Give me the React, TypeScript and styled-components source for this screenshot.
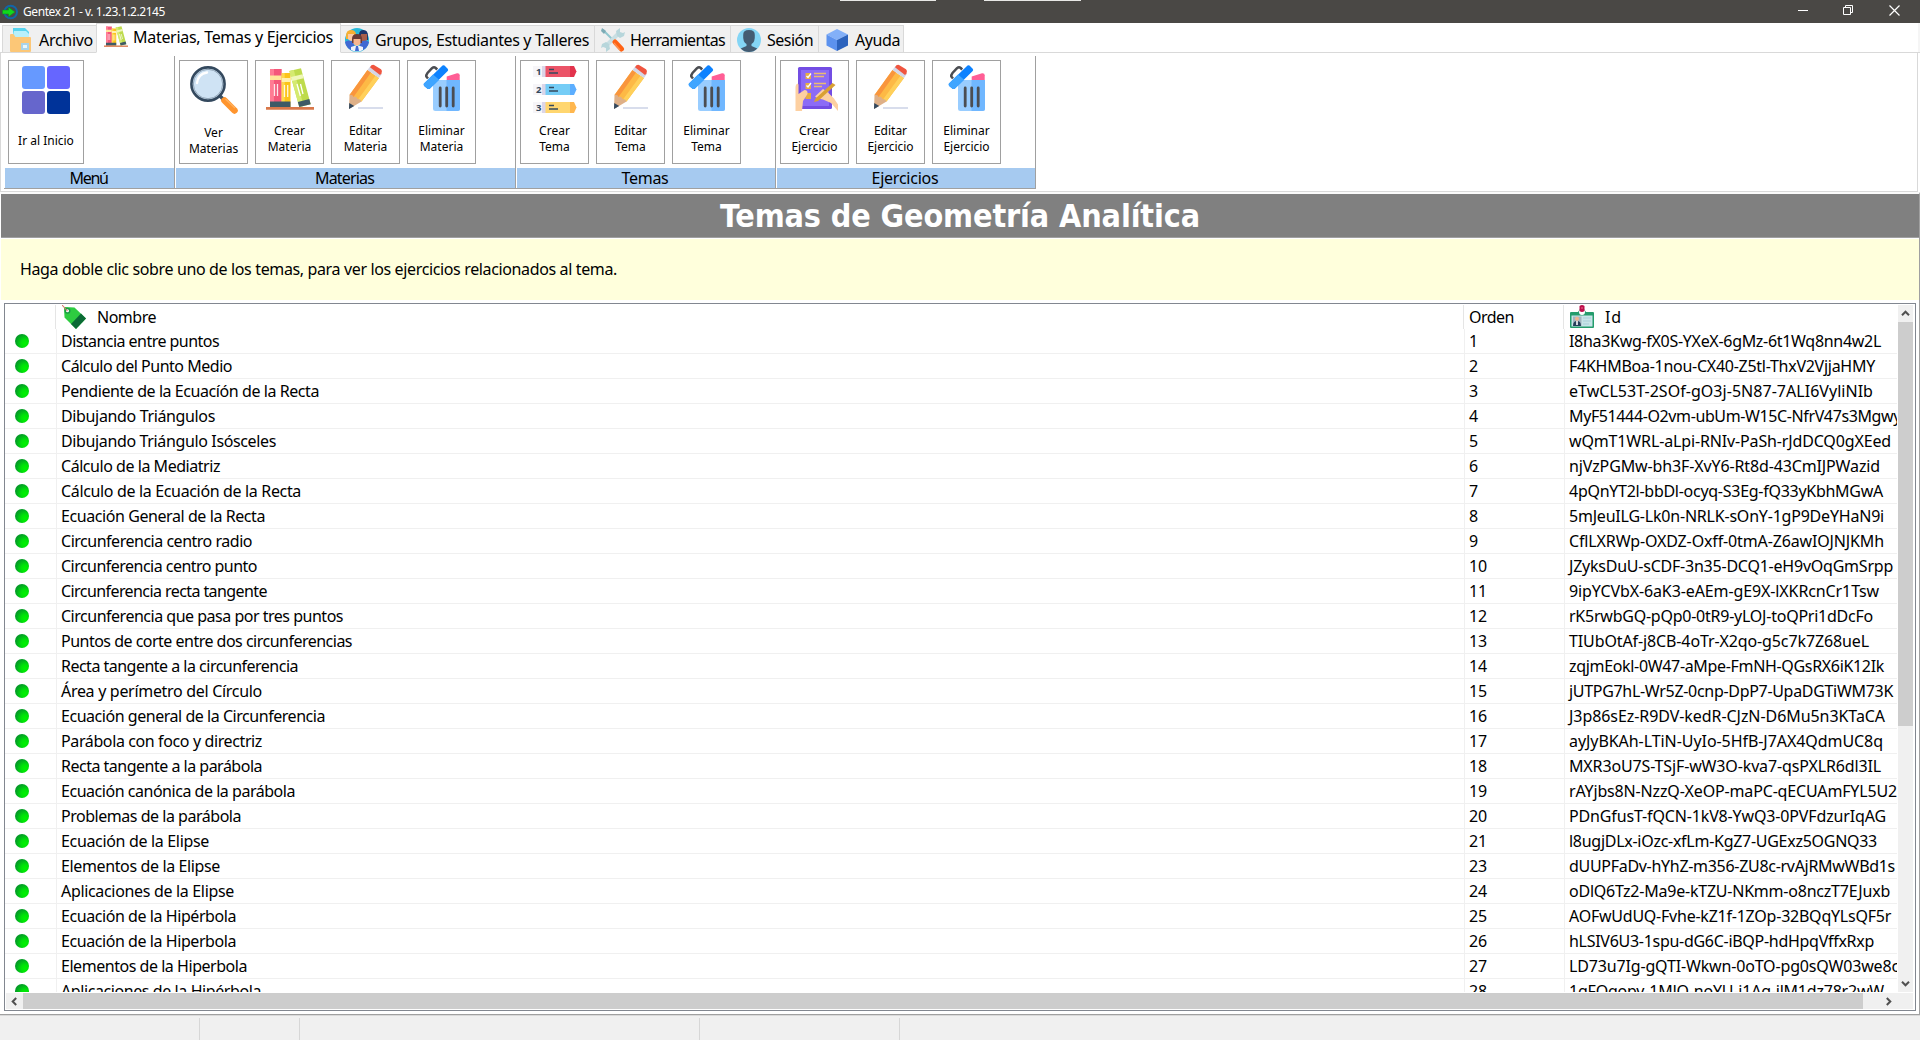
import React, { useLayoutEffect, useRef, useState } from "react";
import styled, { createGlobalStyle } from "styled-components";

const ui = `"Noto Sans", "DejaVu Sans Condensed", sans-serif`;

const GlobalStyle = createGlobalStyle`
  * { box-sizing: border-box; }
  body { margin: 0; background: #fff; overflow: hidden; }
  svg { display: block; flex: none; }
`;

/* ---------- text with a fixed advance width ---------- */

const Run = styled.span`
  display: inline-block;
  white-space: pre;
  font-variant-ligatures: none;
`;

function Fit({ w, children }: { w: number; children: string }) {
  const ref = useRef<HTMLSpanElement>(null);
  const [spacing, setSpacing] = useState(0);
  useLayoutEffect(() => {
    const natural = ref.current!.getBoundingClientRect().width;
    setSpacing((w - natural) / children.length);
  }, [w, children]);
  return (
    <Run ref={ref} style={{ letterSpacing: spacing }}>
      {children}
    </Run>
  );
}

/* ---------- window frame ---------- */

const Window = styled.div`
  display: flex;
  flex-direction: column;
  width: 1920px;
  height: 1040px;
  background: #fff;
  color: #000;
  font: 16px/24px ${ui};
  overflow: hidden;
`;

const TitleBar = styled.header`
  position: relative;
  display: flex;
  align-items: center;
  flex: none;
  height: 23px;
  padding: 0 20px 0 2px;
  gap: 5px;
  background: #4a4845;
  color: #fff;
  font-size: 12px;
  line-height: 22px;
`;

const Caption = styled.div`
  flex: 1;
`;

const EdgeMark = styled.i<{ $x: number; $w: number }>`
  position: absolute;
  top: 0;
  left: ${(p) => p.$x}px;
  width: ${(p) => p.$w}px;
  height: 1px;
  background: #e8e8e6;
`;

const Controls = styled.div`
  display: flex;
  gap: 35px;
  padding-bottom: 2px;
`;

/* ---------- tabs ---------- */

const TabStrip = styled.nav`
  display: flex;
  align-items: flex-end;
  flex: none;
  height: 30px;
  padding-left: 2px;
  box-shadow: inset 0 -1px #d9d9d9, inset -2px 0 #f5f5f5;
`;

const Tab = styled.div<{ $w: number; $pad: number; $gap: number; $active?: boolean }>`
  display: flex;
  align-items: center;
  width: ${(p) => p.$w}px;
  height: ${(p) => (p.$active ? 30 : 28)}px;
  padding: ${(p) => (p.$active ? "0 0 3px" : "1px 0 0")} ${(p) => p.$pad}px;
  gap: ${(p) => p.$gap}px;
  border: 1px solid #d9d9d9;
  border-left-width: ${(p) => (p.$active ? 1 : 0)}px;
  border-bottom-color: ${(p) => (p.$active ? "#fff" : "#d9d9d9")};
  background: ${(p) => (p.$active ? "#fff" : "#f0f0f0")};
  &:first-child { border-left-width: 1px; border-right-width: 0; }
`;

/* ---------- ribbon ---------- */

const Ribbon = styled.section`
  display: flex;
  flex: none;
  width: 1918px;
  height: 139px;
  padding: 3px 0 0 3px;
  border: solid #d9d9d9;
  border-width: 0 1px 1px;
`;

const Group = styled.div<{ $w: number }>`
  display: flex;
  flex-direction: column;
  width: ${(p) => p.$w}px;
  height: 133px;
  border: solid #a0a0a0;
  border-width: 0 1px 1px 0;
`;

const GroupButtons = styled.div`
  display: flex;
  flex: 1;
  gap: 7px;
  padding: 4px 0 0 4px;
`;

const GroupLabel = styled.div`
  height: 20px;
  margin-left: 1px;
  padding-right: 2px;
  background: #a6caf0;
  line-height: 20px;
  text-align: center;
`;

const ToolButton = styled.button<{ $wide?: boolean; $drop: number }>`
  display: flex;
  flex-direction: column;
  align-items: center;
  width: ${(p) => (p.$wide ? 76 : 69)}px;
  height: 104px;
  padding: 5px 0 0;
  border: 1px solid #a0a0a0;
  background: #fff;
  color: #000;
  font: 12px/16px ${ui};
  text-align: center;
  white-space: pre;
  span { margin-top: ${(p) => p.$drop}px; }
`;

/* ---------- content ---------- */

const Content = styled.main`
  display: flex;
  flex-direction: column;
  flex: none;
  height: 823px;
  padding-left: 1px;
  border: solid #a0a0a0;
  border-width: 0 1px 1px 0;
  border-top: 2px solid #fafafa;
`;

const Heading = styled.h1`
  flex: none;
  height: 44px;
  margin: 0;
  border-bottom: 1px solid #a0a0a0;
  background: #808080;
  color: #fff;
  font: bold 32px/44px "DejaVu Sans Condensed", "Noto Sans", sans-serif;
  text-align: center;
`;

const Hint = styled.p`
  flex: none;
  height: 61px;
  margin: 1px 0 3px;
  padding: 18px 0 0 19px;
  background: #ffffdc;
`;

const Grid = styled.div`
  display: grid;
  grid-template: 687px 1fr / 1892px 1fr;
  width: 1912px;
  height: 708px;
  margin-left: 3px;
  padding: 1px 2px 1px 0;
  border: 1px solid #828790;
`;

const Rows = styled.div`
  overflow: hidden;
`;

const HeadRow = styled.div`
  display: grid;
  grid-template-columns: 50px 1408px 100px 1fr;
  height: 24px;
`;

const HeadCell = styled.div<{ $gap?: number }>`
  display: flex;
  align-items: center;
  gap: ${(p) => p.$gap ?? 0}px;
  padding-left: ${(p) => (p.$gap ? 6 : 5)}px;
  border-left: 1px solid #e5e5e5;
  line-height: 22px;
  &:first-child { border-left-color: transparent; }
`;

const Row = styled.div`
  display: grid;
  grid-template-columns: 51px 1408px 100px 1fr;
  height: 25px;
  border-bottom: 1px solid #f0f0f0;
`;

const Cell = styled.div`
  overflow: hidden;
  padding: 1px 0 0 4px;
  border-left: 1px solid #f0f0f0;
  line-height: 23px;
  white-space: nowrap;
`;

const StateCell = styled.div`
  display: flex;
  align-items: center;
  padding-left: 10px;
`;

const Dot = styled.i`
  width: 14px;
  height: 14px;
  border-radius: 50%;
  background: radial-gradient(circle at 72% 68%, #00f200 0, #00e208 28%, #03a822 62%, #0b7a35 100%);
`;

const VScroll = styled.div`
  display: flex;
  flex-direction: column;
  justify-content: space-between;
  width: 15px;
  margin-left: 1px;
  background: #f0f0f0;
`;

const VThumb = styled.div`
  height: 404px;
  margin-bottom: auto;
  background: #cdcdcd;
`;

const HScroll = styled.div`
  display: flex;
  height: 16px;
  margin: 1px 0 0 1px;
  background: #f0f0f0;
`;

const HThumb = styled.div`
  width: 1840px;
  background: #cdcdcd;
`;

const Corner = styled.div`
  width: 16px;
  height: 16px;
  margin-top: 1px;
  background: #f0f0f0;
`;

const ArrowBox = styled.div<{ $w: number; $h: number }>`
  display: flex;
  align-items: center;
  justify-content: center;
  width: ${(p) => p.$w}px;
  height: ${(p) => p.$h}px;
`;

const Spacer = styled.div`
  flex: 1;
`;

const StatusBar = styled.footer`
  display: flex;
  flex: 1;
  padding-top: 2px;
  background: #f0f0f0;
  border-top: 1px solid #d9d9d9;
`;

const StatusPane = styled.div<{ $w: number }>`
  width: ${(p) => p.$w}px;
  height: 22px;
  border-right: 1px solid #d7d7d7;
`;

/* ---------- icons ---------- */

const AppIcon = () => (
  <svg width="16" height="16" viewBox="0 0 16 16">
    <circle cx="8.700" cy="8" r="6.300" fill="none" stroke="#1266a8" strokeWidth="1.900" />
    <path d="M.5 6h6V3.200L13 8l-6.500 4.800V10h-6z" fill="#12d81b" stroke="#0b8f2c" strokeWidth=".6" />
  </svg>
);

const MinimizeIcon = () => (
  <svg width="10" height="11" viewBox="0 0 10 11"><path d="M0 5.5h10" stroke="#fff" /></svg>
);
const RestoreIcon = () => (
  <svg width="11" height="11" viewBox="0 0 11 11" fill="none" stroke="#fff">
    <path d="M.5 2.5h7v7h-7zM2.5 2.5v-2h7v7h-2" />
  </svg>
);
const CloseIcon = () => (
  <svg width="11" height="11" viewBox="0 0 11 11"><path d="M.5.5l10 10M10.5.5l-10 10" stroke="#fff" strokeWidth="1.2" /></svg>
);

const FolderIcon = () => (
  <svg width="24" height="24" viewBox="0 0 24 24">
    <path d="M4 0h12l4 4v8H4z" fill="#58d4ef" />
    <path d="M5 3h12l3 3v6H3z" fill="#b8f0fb" />
    <path d="M1 7q0-1 1-1h2q1 0 1.500 1.500T7 9h14q1 0 1 1v13q0 1-1 1H2q-1 0-1-1z" fill="#fcc777" />
    <path d="M12 15h8v7h-8z" fill="#a9d3ea" />
    <path d="M14 17h4v3h-4z" fill="#e9f6fc" />
  </svg>
);

const BooksIcon = ({ size }: { size: number }) => (
  <svg width={size} height={size} viewBox="0 0 48 48">
    <path d="M4 3h11.700v38H4z" fill="#f4577a" />
    <path d="M4 3h4v38H4z" fill="#ff7b94" />
    <path d="M4 9.500h11.700V14H4z" fill="#ffe59a" />
    <path d="M15.700 7H24.500v34h-8.800z" fill="#fcc419" />
    <path d="M15.700 7h3v34h-3z" fill="#ffd84d" />
    <path d="M15.700 12h8.800v4h-8.800z" fill="#fff0b0" />
    <path d="M4 35.500h20.500V41H4z" fill="#3e5a66" />
    <path d="M8.500 18v12M11.500 18v12M18.500 19v12M21.700 19v12" stroke="#fff" strokeWidth="1.300" opacity=".85" />
    <path d="M23.300 5L35 2.300l9.700 36L33.300 41z" fill="#bedb4c" />
    <path d="M23.300 5l4.500-1 9.900 36-4.400 1z" fill="#d5ea70" />
    <path d="M25 11l11.600-2.800 1 4L26 15z" fill="#f0f7ba" />
    <path d="M31.800 36l11.500-3 1.400 5.300L33.300 41z" fill="#3e5a66" />
    <path d="M31 18l3.400 12M34.500 18l2.500 10" stroke="#fff" strokeWidth="1.300" />
    <path d="M0 41h48v2.700H0z" fill="#d9784a" />
  </svg>
);

const PeopleIcon = () => (
  <svg width="24" height="24" viewBox="0 0 24 24">
    <circle cx="12" cy="12" r="12" fill="#28b9d9" />
    <path d="M1 8q0-6 5-6t5 5v4H1z" fill="#f7b032" />
    <path d="M3 6h6v5q-3 4-6 0z" fill="#fdc9a2" />
    <path d="M14 7q0-5 4.500-5T23 8v4h-8z" fill="#1d356b" />
    <path d="M16 6h6v6q-3 3-6 0z" fill="#a85e4a" />
    <path d="M0 14q3-3 9 0v9Q1 21 0 14zM24 14q-3-3-9 0v9q8-2 9-9z" fill="#4169d2" />
    <path d="M7 11q0-5 5-5t5 5v4H7z" fill="#6b3b36" />
    <path d="M8.500 11h7v5q-3.500 4-7 0z" fill="#f6b68f" />
    <path d="M6 19q6-3 12 0v3q-6 3-12 0z" fill="#eff3fa" />
    <path d="M11 18h2l1 5h-4z" fill="#4169d2" />
  </svg>
);

const ToolsIcon = () => (
  <svg width="24" height="24" viewBox="0 0 24 24" fill="none">
    <path d="M2 2l10 10" stroke="#90c6ce" strokeWidth="2" strokeLinecap="round" />
    <path d="M1 0l4 3-2 3-3-3z" fill="#7dabb5" />
    <path d="M4 19L18 5" stroke="#c9dfe3" strokeWidth="4" />
    <path d="M16 8l-1-5 4-3 0 4 3 1 2-1-1 4-4 2zM8 16l1 5-4 3V20l-3-1-2 1 1-4 4-2z" fill="#b7d6db" />
    <path d="M14 14l6.500 7" stroke="#ff6315" strokeWidth="5" strokeLinecap="round" />
    <path d="M13 15l6 7" stroke="#ff9350" strokeWidth="1.300" />
  </svg>
);

const UserIcon = () => (
  <svg width="24" height="24" viewBox="0 0 24 24">
    <circle cx="12" cy="12" r="12" fill="#84d5f5" />
    <path d="M6.200 7Q6 2 12 2t5.800 5q.5 7-3.300 9v2l5.800 2.500Q17 24 12 24t-8.300-3.500L9.500 18v-2Q5.700 14 6.200 7z" fill="#445c72" />
  </svg>
);

const CubeIcon = () => (
  <svg width="24" height="24" viewBox="0 0 24 24">
    <path d="M12 1l11 5.500-11 5.500L1.500 6.500z" fill="#83b0f8" />
    <path d="M1.500 6.500L12 12v11L1.500 17.500z" fill="#5c92ee" />
    <path d="M23 6.500L12 12v11l11-5.500z" fill="#2c63bd" />
  </svg>
);

const TilesIcon = () => (
  <svg width="48" height="48" viewBox="0 0 48 48">
    <rect width="23" height="23" rx="3" fill="#6699ff" />
    <rect x="25" width="23" height="23" rx="3" fill="#6666ff" />
    <rect y="25" width="23" height="23" rx="3" fill="#6666cc" />
    <rect x="25" y="25" width="23" height="23" rx="3" fill="#003399" />
  </svg>
);

const LensIcon = () => (
  <svg width="48" height="48" viewBox="0 0 48 48" fill="none">
    <path d="M29 29l6 6" stroke="#3b5063" strokeWidth="3.500" />
    <path d="M34.500 34.500l10 10" stroke="#ff952e" strokeWidth="6.500" strokeLinecap="round" />
    <path d="M35.500 33l9.500 9" stroke="#ffb05c" strokeWidth="1.500" />
    <circle cx="18" cy="18" r="16.600" fill="#cfe3f4" stroke="#34495e" strokeWidth="2.600" />
    <circle cx="18" cy="18" r="14.700" stroke="#8fa3b5" strokeWidth="1" />
    <path d="M7 17Q8 8 17 6.500" stroke="#fff" strokeWidth="2.400" strokeLinecap="round" />
  </svg>
);

const PencilIcon = () => (
  <svg width="48" height="48" viewBox="0 0 48 48" overflow="visible">
    <path d="M16 42h25" stroke="#d4daea" strokeWidth="1.800" />
    <path d="M7.500 29L25.500 4l11.500 8L19.500 35.500z" fill="#fdb945" />
    <path d="M7.500 29L25.500 4l3.500 2.500L11.500 31z" fill="#f9953c" />
    <path d="M16 33.500L33.600 9.600 37 12 19.500 35.500z" fill="#ffd05a" />
    <path d="M7.500 29q3-1 4 2 3-1 4 2 3-.5 4 2.500L7 43z" fill="#deb088" />
    <path d="M7.200 37l5 3L7 43z" fill="#34495e" />
    <path d="M25.500 4L28.500 0l11.300 8L37 12z" fill="#d4d6e6" />
    <path d="M28 1.300q1.500-3 4-2.300l7 4.300q2 2 .5 4.200L38 9z" fill="#f0553f" />
  </svg>
);

const TrashIcon = () => (
  <svg width="48" height="48" viewBox="0 0 48 48" overflow="visible">
    <path d="M28.700 14.500v-4L39 7.300q2.700-.3 2.700 2v5z" fill="#ff5e95" />
    <path d="M15 14h27v28.500q0 2.500-2.500 2.500h-22Q15 45 15 42.500z" fill="#99cdff" />
    <path d="M28.500 14H42v28.500q0 2.500-2.500 2.500h-11z" fill="#70b7ff" />
    <path d="M22.200 22v18M28.700 22v18M35.200 22v18" stroke="#4b4d52" strokeWidth="2.800" strokeLinecap="round" />
    <path d="M10 12.500L8.300 10.500Q8 9 9.500 7L14 2.200q2-1.700 3.700-.2l1.500 1.500" fill="none" stroke="#4b4d52" strokeWidth="2.500" />
    <path d="M6 17.500L24 0q1-1.400 2.500-.4l3.200 3.100q1 1.300 0 2.400L12 22.500q-1.400 1-2.800 0L6.200 20q-1-1.300-.2-2.500z" fill="#0c82ff" />
    <path d="M6 17.500l9-8.900 6.200 5.200L12 22.500q-1.400 1-2.800 0L6.200 20q-1-1.300-.2-2.500z" fill="#3fa5ff" />
  </svg>
);

const listBands = [
  { y: 0, main: "#eb5468", tip: "#e2334c" },
  { y: 18, main: "#75cdf6", tip: "#5caeff" },
  { y: 36, main: "#ffd66f", tip: "#ffb74e" },
];

const ListIcon = () => (
  <svg width="48" height="48" viewBox="0 0 48 48">
    {listBands.map((b, i) => (
      <g key={b.y} transform={`translate(0 ${b.y})`}>
        <path d="M2 0h10v11H2z" fill="#f6f5f8" />
        <path d="M11 0h4v11h-4z" fill="#dbd5e8" />
        <path d="M14.500 0H40v11H14.500z" fill={b.main} />
        <path d="M39 0h4l2.500 5.500L43 11h-4z" fill={b.tip} />
        <path d="M18 3.500h5M18 7h9" stroke="#34495e" strokeWidth="1.300" />
        <text x="5" y="9" fontSize="9.500" fontWeight="700" fontFamily="Noto Sans" fill="#34495e">{i + 1}</text>
      </g>
    ))}
  </svg>
);

const ChecklistIcon = () => (
  <svg width="48" height="48" viewBox="0 0 48 48">
    <rect x="7" y="1" width="34" height="42" rx="1.500" fill="#734de3" />
    <path d="M10 4h28v36H10z" fill="#8c6bf6" />
    <path d="M14.500 7h5.500v6h-5.500zM14.500 17h5.500v6h-5.500zM14.500 27h5.500v6h-5.500z" fill="#e6ad42" />
    <path d="M15.500 10l1.500 1.500 3-4M15.500 19.500L17 21l3-4" fill="none" stroke="#fff" strokeWidth="1.300" />
    <path d="M23 7.500h12M23 10.500h10M23 17.500h12M23 20.500h8" stroke="#ecbb70" strokeWidth="1.500" />
    <path d="M4.500 45V21q0-3 2-3.500l1 1v9.500l6-4q3.500 0 3 4l-4.500 7-1 10z" fill="#fdd0a1" />
    <path d="M24 30.500l8-7.500 5 3.500 6 6 4 6V45l-7-8-8-3.500-5-1z" fill="#fdd0a1" />
    <path d="M23 36l1.500-3.500L41.500 17l3 2L27 35z" fill="#d9a032" />
  </svg>
);

const TagIcon = () => (
  <svg width="24" height="24" viewBox="0 0 24 24">
    <path d="M2 3q0-1 1-1l9.500.5L24 13.500 14 24 2.500 12.500z" fill="#2ecc40" />
    <path d="M24 13.500L14 24 9 19l10-10.500z" fill="#0b6a35" />
    <circle cx="5.500" cy="5.800" r="3" fill="#1a9b45" />
    <circle cx="5.500" cy="5.800" r="1.500" fill="#fff" />
    <path d="M0 0l5.500 6" stroke="#d5766a" strokeWidth="1.100" />
  </svg>
);

const BadgeIcon = () => (
  <svg width="24" height="24" viewBox="0 0 24 24">
    <path d="M1 7h7l2-3h4l2 3h7q1 0 1 1v14q0 1-1 1H1q-1 0-1-1V8q0-1 1-1z" fill="#249c6c" />
    <path d="M1.500 10.500h21v11h-21z" fill="#c7e4e8" />
    <path d="M3 11.500h8.500v9.500H3z" fill="#a2b6c1" />
    <path d="M3 21q0-5 4-5t4 5z" fill="#263f5a" />
    <path d="M6.200 16h1.600v4H6.200z" fill="#fff" />
    <circle cx="7" cy="13.800" r="2.100" fill="#efb491" />
    <path d="M13 13h8M13 16h8M13 19h6" stroke="#a9cfd8" strokeWidth="1" />
    <circle cx="12" cy="7" r="3" fill="#fff" />
    <path d="M9.500 1q2.500-2 5 0v5q-2.500 2-5 0z" fill="#bd0e4b" />
    <path d="M12 2v2" stroke="#f06a8d" />
  </svg>
);

const rotations = { up: 0, right: 90, down: 180, left: 270 };
const Chevron = ({ to }: { to: keyof typeof rotations }) => (
  <svg width="9" height="9" viewBox="0 0 9 9">
    <path d="M1 6.200L4.500 2.700 8 6.200" fill="none" stroke="#505050" strokeWidth="2" transform={`rotate(${rotations[to]} 4.5 4.5)`} />
  </svg>
);

/* ---------- data ---------- */

const tabs = [
  { text: "Archivo", w: 94, pad: 6, gap: 6, tw: 54, icon: <FolderIcon /> },
  { text: "Materias, Temas y Ejercicios", w: 245, pad: 7, gap: 5, tw: 200, icon: <BooksIcon size={24} />, active: true },
  { text: "Grupos, Estudiantes y Talleres", w: 254, pad: 4, gap: 6, tw: 214, icon: <PeopleIcon /> },
  { text: "Herramientas", w: 136, pad: 6, gap: 5, tw: 95, icon: <ToolsIcon /> },
  { text: "Sesión", w: 88, pad: 6, gap: 6, tw: 46, icon: <UserIcon /> },
  { text: "Ayuda", w: 85, pad: 6, gap: 6, tw: 45, icon: <CubeIcon /> },
];

type Tool = { text: string; icon: React.ReactNode; wide?: boolean; drop?: number };
const groups: { title: string; w: number; tw: number; tools: Tool[] }[] = [
  { title: "Menú", w: 171, tw: 38, tools: [{ text: "Ir al Inicio", icon: <TilesIcon />, wide: true, drop: 19 }] },
  {
    title: "Materias", w: 341, tw: 59, tools: [
      { text: "Ver\nMaterias", icon: <LensIcon />, drop: 11 },
      { text: "Crear\nMateria", icon: <BooksIcon size={48} /> },
      { text: "Editar\nMateria", icon: <PencilIcon /> },
      { text: "Eliminar\nMateria", icon: <TrashIcon /> },
    ],
  },
  {
    title: "Temas", w: 260, tw: 47, tools: [
      { text: "Crear\nTema", icon: <ListIcon /> },
      { text: "Editar\nTema", icon: <PencilIcon /> },
      { text: "Eliminar\nTema", icon: <TrashIcon /> },
    ],
  },
  {
    title: "Ejercicios", w: 260, tw: 67, tools: [
      { text: "Crear\nEjercicio", icon: <ChecklistIcon /> },
      { text: "Editar\nEjercicio", icon: <PencilIcon /> },
      { text: "Eliminar\nEjercicio", icon: <TrashIcon /> },
    ],
  },
];

/* name, name width, order, id, id width */
const topics: [string, number, number, string, number][] = [
  ["Distancia entre puntos", 158, 1, "I8ha3Kwg-fX0S-YXeX-6gMz-6t1Wq8nn4w2L", 312],
  ["Cálculo del Punto Medio", 171, 2, "F4KHMBoa-1nou-CX40-Z5tl-ThxV2VjjaHMY", 306],
  ["Pendiente de la Ecuacíón de la Recta", 258, 3, "eTwCL53T-2SOf-gO3j-5N87-7ALI6VyliNIb", 304],
  ["Dibujando Triángulos", 154, 4, "MyF51444-O2vm-ubUm-W15C-NfrV47s3Mgwy", 332],
  ["Dibujando Triángulo Isósceles", 215, 5, "wQmT1WRL-aLpi-RNIv-PaSh-rJdDCQ0gXEed", 322],
  ["Cálculo de la Mediatriz", 159, 6, "njVzPGMw-bh3F-XvY6-Rt8d-43CmIJPWazid", 311],
  ["Cálculo de la Ecuación de la Recta", 240, 7, "4pQnYT2l-bbDl-ocyq-S3Eg-fQ33yKbhMGwA", 314],
  ["Ecuación General de la Recta", 204, 8, "5mJeuILG-Lk0n-NRLK-sOnY-1gP9DeYHaN9i", 315],
  ["Circunferencia centro radio", 191, 9, "CflLXRWp-OXDZ-Oxff-0tmA-Z6awIOJNJKMh", 315],
  ["Circunferencia centro punto", 196, 10, "JZyksDuU-sCDF-3n35-DCQ1-eH9vOqGmSrpp", 324],
  ["Circunferencia recta tangente", 206, 11, "9ipYCVbX-6aK3-eAEm-gE9X-lXKRcnCr1Tsw", 310],
  ["Circunferencia que pasa por tres puntos", 282, 12, "rK5rwbGQ-pQp0-0tR9-yLOJ-toQPri1dDcFo", 304],
  ["Puntos de corte entre dos circunferencias", 291, 13, "TIUbOtAf-j8CB-4oTr-X2qo-g5c7k7Z68ueL", 300],
  ["Recta tangente a la circunferencia", 237, 14, "zqjmEokl-0W47-aMpe-FmNH-QGsRX6iK12Ik", 315],
  ["Área y perímetro del Círculo", 201, 15, "jUTPG7hL-Wr5Z-0cnp-DpP7-UpaDGTiWM73K", 324],
  ["Ecuación general de la Circunferencia", 264, 16, "J3p86sEz-R9DV-kedR-CJzN-D6Mu5n3KTaCA", 316],
  ["Parábola con foco y directriz", 201, 17, "ayJyBKAh-LTiN-UyIo-5HfB-J7AX4QdmUC8q", 314],
  ["Recta tangente a la parábola", 201, 18, "MXR3oU7S-TSjF-wW3O-kva7-qsPXLR6dl3IL", 312],
  ["Ecuación canónica de la parábola", 234, 19, "rAYjbs8N-NzzQ-XeOP-maPC-qECUAmFYL5U2", 328],
  ["Problemas de la parábola", 180, 20, "PDnGfusT-fQCN-1kV8-YwQ3-0PVFdzurIqAG", 317],
  ["Ecuación de la Elipse", 148, 21, "l8ugjDLx-iOzc-xfLm-KgZ7-UGExz5OGNQ33", 308],
  ["Elementos de la Elipse", 159, 23, "dUUPFaDv-hYhZ-m356-ZU8c-rvAjRMwWBd1s", 326],
  ["Aplicaciones de la Elipse", 173, 24, "oDlQ6Tz2-Ma9e-kTZU-NKmm-o8nczT7EJuxb", 321],
  ["Ecuación de la Hipérbola", 175, 25, "AOFwUdUQ-Fvhe-kZ1f-1ZOp-32BQqYLsQF5r", 322],
  ["Ecuación de la Hiperbola", 175, 26, "hLSIV6U3-1spu-dG6C-iBQP-hdHpqVffxRxp", 305],
  ["Elementos de la Hiperbola", 186, 27, "LD73u7Ig-gQTI-Wkwn-0oTO-pg0sQW03we8c", 330],
  ["Aplicaciones de la Hipérbola", 200, 28, "1gFQqopv-1MJO-noYU-j1Ag-jlM1dz78r2wW", 315],
];

const panes = [200, 100, 400, 200];

export default function App() {
  return (
    <Window>
      <GlobalStyle />
      <TitleBar>
        <EdgeMark $x={840} $w={96} />
        <EdgeMark $x={984} $w={97} />
        <AppIcon />
        <Caption><Fit w={142}>Gentex 21 - v. 1.23.1.2.2145</Fit></Caption>
        <Controls><MinimizeIcon /><RestoreIcon /><CloseIcon /></Controls>
      </TitleBar>

      <TabStrip>
        {tabs.map((t) => (
          <Tab key={t.text} $w={t.w} $pad={t.pad} $gap={t.gap} $active={t.active}>
            {t.icon}
            <Fit w={t.tw}>{t.text}</Fit>
          </Tab>
        ))}
      </TabStrip>

      <Ribbon>
        {groups.map((g) => (
          <Group key={g.title} $w={g.w}>
            <GroupButtons>
              {g.tools.map((b) => (
                <ToolButton key={b.text} $wide={b.wide} $drop={b.drop ?? 9}>
                  {b.icon}
                  <span>{b.text}</span>
                </ToolButton>
              ))}
            </GroupButtons>
            <GroupLabel><Fit w={g.tw}>{g.title}</Fit></GroupLabel>
          </Group>
        ))}
      </Ribbon>

      <Content>
        <Heading><Fit w={480}>Temas de Geometría Analítica</Fit></Heading>
        <Hint>
          <Fit w={597}>Haga doble clic sobre uno de los temas, para ver los ejercicios relacionados al tema.</Fit>
        </Hint>
        <Grid>
          <Rows>
            <HeadRow>
              <HeadCell />
              <HeadCell $gap={11}><TagIcon /><Fit w={59}>Nombre</Fit></HeadCell>
              <HeadCell><Fit w={45}>Orden</Fit></HeadCell>
              <HeadCell $gap={11}><BadgeIcon /><Fit w={17}>Id</Fit></HeadCell>
            </HeadRow>
            {topics.map(([name, nameWidth, order, id, idWidth]) => (
              <Row key={id}>
                <StateCell><Dot /></StateCell>
                <Cell><Fit w={nameWidth}>{name}</Fit></Cell>
                <Cell><Fit w={order < 10 ? 9 : 18}>{String(order)}</Fit></Cell>
                <Cell><Fit w={idWidth}>{id}</Fit></Cell>
              </Row>
            ))}
          </Rows>
          <VScroll>
            <ArrowBox $w={15} $h={17}><Chevron to="up" /></ArrowBox>
            <VThumb />
            <ArrowBox $w={15} $h={17}><Chevron to="down" /></ArrowBox>
          </VScroll>
          <HScroll>
            <ArrowBox $w={17} $h={16}><Chevron to="left" /></ArrowBox>
            <HThumb />
            <Spacer />
            <ArrowBox $w={17} $h={16}><Chevron to="right" /></ArrowBox>
          </HScroll>
          <Corner />
        </Grid>
      </Content>

      <StatusBar>
        {panes.map((w, i) => <StatusPane key={i} $w={w} />)}
      </StatusBar>
    </Window>
  );
}
